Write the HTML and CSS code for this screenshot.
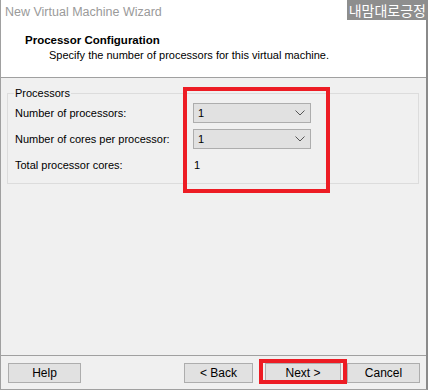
FILE: index.html
```html
<!DOCTYPE html>
<html lang="en">
<head>
    <meta charset="UTF-8">
    <title>New Virtual Machine Wizard</title>
    <link rel="stylesheet" href="styles.css">
</head>
<body>

    <div class="wizard">
        <!-- title + header -->
        <div class="wizard-header">
            <div class="title-bar">New Virtual Machine Wizard</div>
            <div class="page-title">Processor Configuration</div>
            <div class="page-desc">Specify the number of processors for this virtual machine.</div>
        </div>

        <div class="wizard-body">
            <fieldset class="group">
                <legend>Processors</legend>
                <div class="row">
                    <label>Number of processors:</label>
                    <div class="combo"><span>1</span><svg width="10" height="6" viewBox="0 0 10 6"><path d="M0.5 0.5 L5 5 L9.5 0.5" fill="none" stroke="#555" stroke-width="1"/></svg></div>
                </div>
                <div class="row">
                    <label>Number of cores per processor:</label>
                    <div class="combo"><span>1</span><svg width="10" height="6" viewBox="0 0 10 6"><path d="M0.5 0.5 L5 5 L9.5 0.5" fill="none" stroke="#555" stroke-width="1"/></svg></div>
                </div>
                <div class="row">
                    <label>Total processor cores:</label>
                    <div class="value">1</div>
                </div>
            </fieldset>
        </div>

        <div class="wizard-footer">
            <button class="btn">Help</button>
            <div class="spacer"></div>
            <button class="btn btn-back">&lt; Back</button>
            <button class="btn btn-next">Next &gt;</button>
            <button class="btn">Cancel</button>
        </div>

        <!-- overlays -->
        <div class="watermark">내맘대로긍정</div>
        <div class="mark mark-combo"></div>
        <div class="mark mark-next"></div>
    </div>

</body>
</html>
```

FILE: styles.css
```css
body {
    margin: 0;
    font-family: 'Liberation Sans', Arial, sans-serif;
    font-size: 11px;
    color: #000;
}

.wizard {
    position: relative;
    width: 428px;
    height: 390px;
    box-sizing: border-box;
    border-left: 1px solid #a0a0a0;
    border-right: 2px solid #8a8a8a;
    border-bottom: 1px solid #a0a0a0;
    background-color: #f0f0f0;
    display: flex;
    flex-direction: column;
}

/* --- header --- */
.wizard-header {
    height: 78px;
    background-color: #ffffff;
    border-bottom: 1px solid #a0a0a0;
    box-sizing: border-box;
}

.title-bar {
    padding: 5px 0 0 4px;
    height: 28px;
    box-sizing: border-box;
    font-size: 12.5px;
    color: #9a9a9a;
}

.page-title {
    margin: 6px 0 0 24px;
    font-size: 11.5px;
    font-weight: 700;
}

.page-desc {
    margin: 3px 0 0 48px;
}

/* --- body --- */
.wizard-body {
    flex: 1;
    padding: 8px 7px 0 6px;
}

.group {
    margin: 0;
    padding: 0 8px 0 7px;
    border: 1px solid #dcdcdc;
    height: 98px;
    box-sizing: border-box;
}

.group legend {
    padding: 0 1px;
    margin-left: -1px;
    line-height: 14px;
}

.row {
    display: flex;
    align-items: center;
    height: 26px;
}

.row label {
    width: 178px;
}

.combo {
    width: 107px;
    height: 18px;
    border: 1px solid #adadad;
    background-color: #e1e1e1;
    display: flex;
    align-items: center;
    justify-content: space-between;
    padding: 0 5px 0 4px;
}

.value {
    padding-left: 1px;
}

/* --- footer --- */
.wizard-footer {
    height: 34px;
    border-top: 1px solid #a0a0a0;
    display: flex;
    align-items: flex-start;
    padding: 7px 6px 0 7px;
    gap: 6px;
    box-sizing: border-box;
}

.spacer {
    flex: 1;
}

.btn {
    width: 73px;
    height: 20px;
    border: 1px solid #adadad;
    background-color: #e1e1e1;
    font-family: 'Liberation Sans', Arial, sans-serif;
    font-size: 12px;
    padding: 0;
    color: #000;
}

.btn-back {
    width: 69px;
}

.btn-next {
    width: 76px;
    margin-left: 6px;
}

/* --- overlays --- */
.watermark {
    position: absolute;
    top: 0;
    right: -2px;
    height: 20px;
    padding: 0 2px;
    background-color: #8e8e8e;
    color: #ffffff;
    font-family: 'Noto Sans CJK KR', sans-serif;
    font-size: 14px;
    line-height: 20px;
}

.mark {
    position: absolute;
    border: 4px solid #ed1c24;
    box-sizing: border-box;
}

.mark-combo {
    left: 182px;
    top: 87px;
    width: 147px;
    height: 106px;
}

.mark-next {
    left: 258px;
    top: 359px;
    width: 88px;
    height: 25px;
}
```
